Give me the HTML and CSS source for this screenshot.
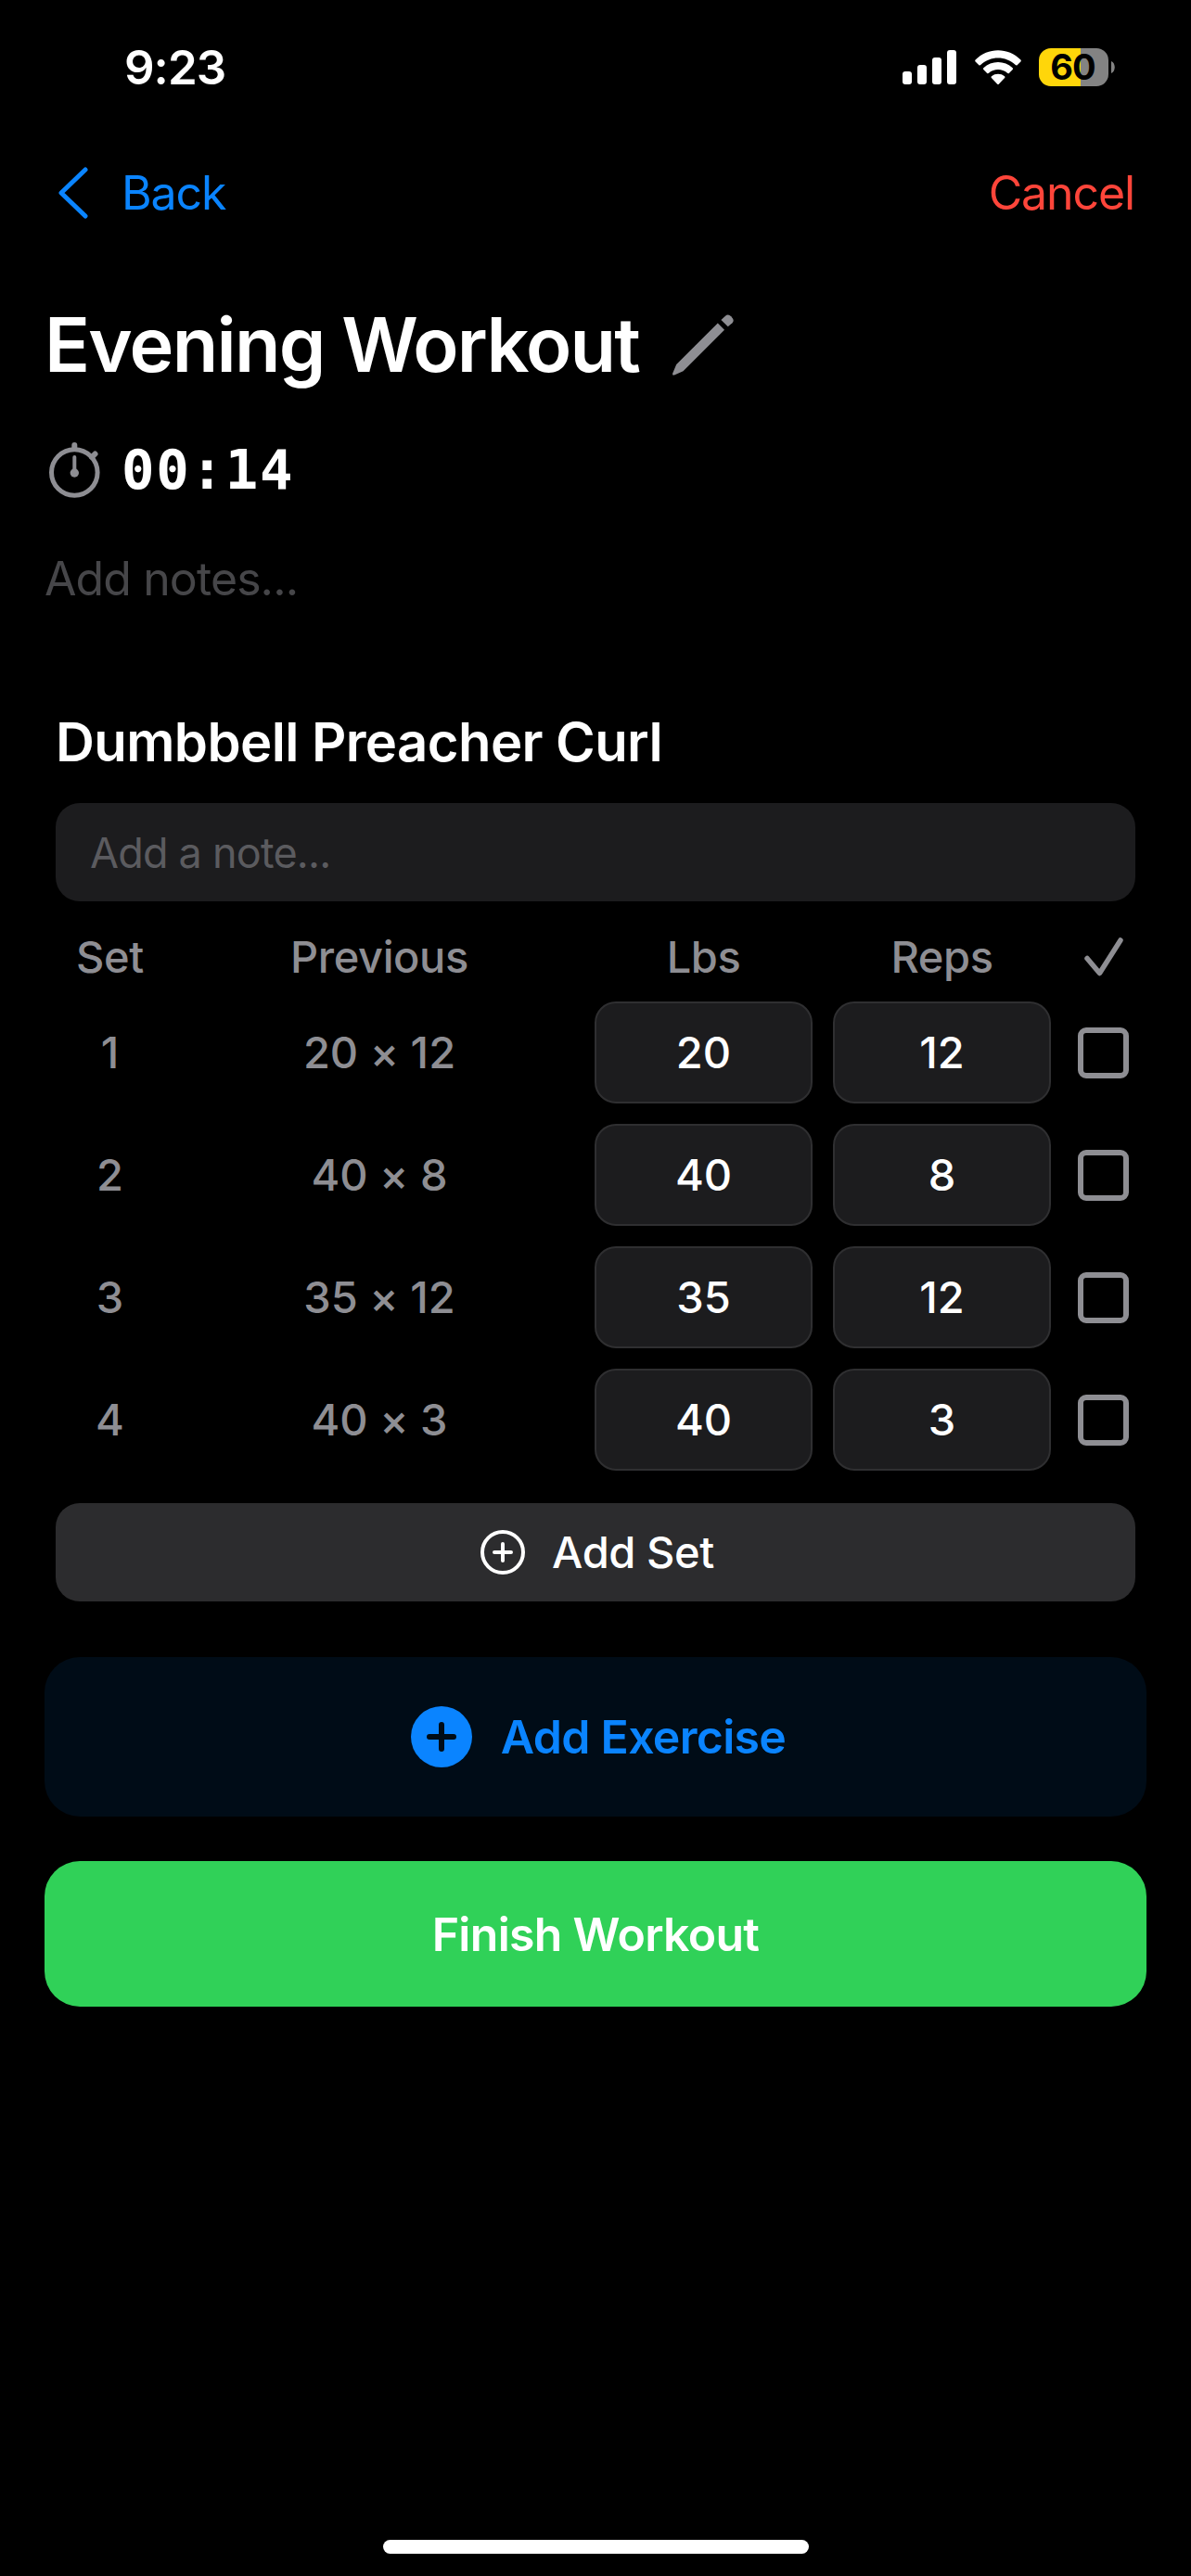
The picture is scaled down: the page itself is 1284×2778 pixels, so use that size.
FILE: index.html
```html
<!DOCTYPE html>
<html lang="en">
<head>
<meta charset="utf-8">
<title>Evening Workout</title>
<link rel="stylesheet" href="styles.css">
</head>
<body>
<div class="screen">
  <header class="status">
    <span class="clock">9:23</span>
    <div class="indicators">
      <svg class="signal" viewBox="0 0 58 38"><rect x="0" y="23" width="10" height="14" rx="3"/><rect x="16" y="16" width="10" height="21" rx="3"/><rect x="32" y="8" width="10" height="29" rx="3"/><rect x="48" y="0" width="10" height="37" rx="3"/></svg>
      <svg class="wifi" viewBox="0 0 50 38"><path d="M0.6 10.6C14-3.2 36-3.2 49.4 10.6Q50.2 11.6 49.4 12.4L45.6 16.2Q44.8 17 43.8 16.1C33.4 6 16.6 6 6.2 16.1Q5.2 17 4.4 16.2L0.6 12.4Q-0.2 11.6 0.6 10.6Z"/><path d="M9.3 19.3C18 11 32 11 40.7 19.3Q41.5 20.2 40.7 21L36.8 24.9Q36 25.6 35 24.8C29.4 19.8 20.6 19.8 15 24.8Q14 25.6 13.2 24.9L9.3 21Q8.5 20.2 9.3 19.3Z"/><path d="M17.9 28.3C22 25 28 25 32.1 28.3Q33 29.2 32.1 30L26 36.4Q25 37.4 24 36.4L17.9 30Q17 29.2 17.9 28.3Z"/></svg>
      <div class="battery"><span class="battery-level">60</span><svg class="battery-nub" viewBox="0 0 4 13"><path d="M0 0C5 2 5 11 0 13Z"/></svg></div>
    </div>
  </header>

  <nav class="nav">
    <a class="back"><svg class="chevron" viewBox="0 0 32 56"><path d="M29 3L3 28L29 53"/></svg><span>Back</span></a>
    <a class="cancel">Cancel</a>
  </nav>

  <section class="summary">
    <div class="title-row">
      <h1 class="title">Evening Workout</h1>
      <svg class="pencil" viewBox="0 0 66 66"><path d="M0.6 65.4Q-.2 65 .2 63.500L4.200 54L48.800 9.600L56 16.800L11.500 61.300L2.500 65.200Q1.200 65.800 .6 65.400Z"/><path d="M52.400 6.000L57 1.800Q60-.8 63.200 2.200Q67.400 6.500 64.500 9.200L59.800 13.200Z"/></svg>
    </div>
    <div class="timer-row">
      <svg class="stopwatch" viewBox="0 0 56 62"><circle cx="28.300" cy="33.500" r="24.800"/><path class="thick" d="M28.300 4V8M50.500 13.500L47 17"/><path class="hand" d="M28.300 17V33"/><circle class="dot" cx="28.300" cy="34" r="4.700"/></svg>
      <span class="timer">00:14</span>
    </div>
    <div class="notes">Add notes...</div>
  </section>

  <section class="exercise">
    <h2 class="exercise-name">Dumbbell Preacher Curl</h2>
    <div class="note-field">Add a note...</div>
    <div class="row head"><span>Set</span><span>Previous</span><span>Lbs</span><span>Reps</span><svg class="check" viewBox="0 0 42 42"><path d="M3 22.500L16.500 38.500L39 3"/></svg></div>
    <div class="sets">
      <div class="row"><span class="index">1</span><span class="prev">20 × 12</span><span class="input">20</span><span class="input">12</span><i class="box"></i></div>
      <div class="row"><span class="index">2</span><span class="prev">40 × 8</span><span class="input">40</span><span class="input">8</span><i class="box"></i></div>
      <div class="row"><span class="index">3</span><span class="prev">35 × 12</span><span class="input">35</span><span class="input">12</span><i class="box"></i></div>
      <div class="row"><span class="index">4</span><span class="prev">40 × 3</span><span class="input">40</span><span class="input">3</span><i class="box"></i></div>
    </div>
    <div class="button add-set"><svg class="plus" viewBox="0 0 48 48"><circle cx="24" cy="24" r="22"/><path d="M24 15V33M15 24H33"/></svg><span>Add Set</span></div>
  </section>

  <div class="button add-exercise"><svg class="plus-fill" viewBox="0 0 66 66"><circle cx="33" cy="33" r="33"/><path d="M33 20V46M20 33H46"/></svg><span>Add Exercise</span></div>
  <div class="button finish"><span>Finish Workout</span></div>

  <div class="home"></div>
</div>
</body>
</html>
```
FILE: styles.css
```css
* { box-sizing: border-box; }
body { margin: 0; background: #000; }
.screen {
  display: flex;
  flex-direction: column;
  width: 1284px;
  height: 2778px;
  background: #000;
  color: #fff;
  font-family: Inter, "Liberation Sans", sans-serif;
  font-size: 47px;
  overflow: hidden;
  white-space: nowrap;
}
svg { display: block; flex: none; fill: none; stroke-linecap: round; stroke-linejoin: round; }
h1, h2 { margin: 0; }

/* Status bar */
.status {
  display: flex;
  justify-content: space-between;
  align-items: center;
  height: 145px;
  padding: 0 82px 0 134px;
}
.clock { font-size: 51px; font-weight: 600; letter-spacing: -1px; }
.indicators { display: flex; align-items: center; gap: 20px; }
.signal { width: 58px; height: 38px; fill: #fff; }
.wifi { width: 50px; height: 38px; fill: #fff; }
.battery { display: flex; align-items: center; gap: 3px; margin-left: -1px; }
.battery-level {
  width: 75px;
  height: 41px;
  border-radius: 13px;
  background: linear-gradient(90deg, #ffd60a 60%, #838383 60%);
  color: #000;
  font-size: 38px;
  font-weight: 700;
  letter-spacing: -1px;
  line-height: 41px;
  text-align: center;
  text-indent: -2px;
}
.battery-nub { width: 4px; height: 13px; fill: #838383; }

/* Navigation */
.nav {
  display: flex;
  justify-content: space-between;
  align-items: center;
  height: 126px;
  padding: 0 61px 0 63px;
  font-size: 50px;
  letter-spacing: -1.1px;
}
.back { display: flex; align-items: center; gap: 36px; color: #0a84ff; }
.chevron { width: 32px; height: 56px; stroke: #0a84ff; stroke-width: 5; }
.cancel { color: #ff453a; }

/* Workout summary */
.summary { padding: 0 48px; }
.title-row { display: flex; align-items: center; gap: 36px; height: 200px; padding-top: 2px; }
.title { font-size: 81px; font-weight: 600; letter-spacing: -1.75px; }
.pencil { width: 66px; height: 66px; fill: #8e8e93; }
.timer-row { display: flex; align-items: center; gap: 23px; height: 72px; padding-left: 4px; }
.stopwatch { width: 56px; height: 62px; stroke: #8e8e93; stroke-width: 5; }
.thick { stroke-width: 6; }
.hand { stroke-width: 4; }
.dot { fill: #8e8e93; stroke: none; }
.timer { padding-bottom: 2px; font-family: "DejaVu Sans Mono", monospace; font-size: 59px; font-weight: 700; letter-spacing: 1.7px; }
.notes { height: 60px; margin-top: 51px; font-size: 50px; letter-spacing: -0.9px; line-height: 61px; color: #464649; }

/* Exercise card */
.exercise { display: flex; flex-direction: column; padding: 0 60px; margin-top: 110px; }
.exercise-name { height: 72px; margin-bottom: 30px; font-size: 58px; font-weight: 600; letter-spacing: -0.6px; line-height: 73px; }
.note-field {
  height: 106px;
  padding-left: 37px;
  border-radius: 26px;
  background: #1c1c1e;
  color: #5b5b5f;
  font-size: 45px;
  letter-spacing: -0.8px;
  line-height: 107px;
}
.row {
  display: grid;
  grid-template-columns: 117px 420px 235px 235px 57px;
  column-gap: 22px;
  align-items: center;
  height: 110px;
  color: #8e8e93;
  font-weight: 500;
  text-align: center;
}
.head { height: 108px; padding-top: 10px; letter-spacing: -0.4px; }
.index, .prev { padding-bottom: 2px; }
.prev { font-feature-settings: "calt" 0; }
.check { width: 42px; height: 42px; margin: 2px 0 0 14px; stroke: #8e8e93; stroke-width: 5.5; }
.sets { display: grid; row-gap: 22px; }
.input {
  height: 110px;
  border: 2px solid #2f2f31;
  border-radius: 23px;
  background: #1c1c1e;
  color: #fff;
  line-height: 106px;
}
.box { width: 55px; height: 55px; margin-left: 7px; border: 6px solid #8e8e93; border-radius: 9px; }

/* Actions */
.button { display: flex; align-items: center; justify-content: center; font-weight: 600; letter-spacing: -0.7px; }
.add-set {
  height: 106px;
  margin-top: 35px;
  padding: 0 0 2px 4px;
  gap: 29px;
  border-radius: 26px;
  background: #2c2c2e;
  font-weight: 500;
  letter-spacing: -0.4px;
}
.plus { width: 48px; height: 48px; margin-top: 2px; stroke: #fff; stroke-width: 4; }
.add-exercise {
  height: 172px;
  margin: 60px 48px 0;
  padding-left: 6px;
  gap: 31px;
  border-radius: 38px;
  background: #000c17;
  color: #0a84ff;
  font-size: 50px;
}
.plus-fill { width: 66px; height: 66px; fill: #0a84ff; stroke: #000c17; stroke-width: 6; }
.plus-fill circle { stroke: none; }
.finish { height: 157px; margin: 48px 48px 0; border-radius: 38px; background: #30d158; font-size: 50px; }

.home { width: 459px; height: 15px; margin: auto auto 24px 413px; border-radius: 8px; background: #fff; }
```
